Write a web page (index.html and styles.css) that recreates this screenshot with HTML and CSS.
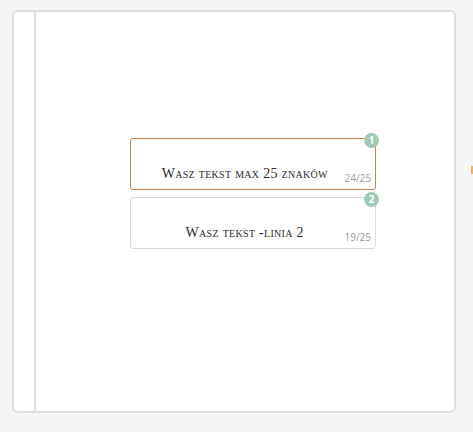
FILE: index.html
```html
<!DOCTYPE html>
<html lang="pl">
<head>
  <meta charset="UTF-8">
  <meta name="viewport" content="width=device-width, initial-scale=1.0">
  <title>Edytor tekstu</title>
  <link rel="stylesheet" href="styles.css">
</head>
<body>
  <div class="editor">
    <div class="sidebar"></div>
    <div class="canvas">
      <div class="fields">
        <div class="field active">
          <span class="badge">1</span>
          <div class="field-text">Wasz tekst max 25 znaków</div>
          <div class="counter">24/25</div>
        </div>
        <div class="field">
          <span class="badge">2</span>
          <div class="field-text">Wasz tekst -linia 2</div>
          <div class="counter">19/25</div>
        </div>
      </div>
    </div>
  </div>
  <div class="edge-mark"></div>
</body>
</html>
```

FILE: styles.css
```css
  body {
    margin: 0;
    background-color: #f4f5f5;
    font-family: 'Liberation Serif', serif;
    position: relative;
    height: 432px;
    overflow: hidden;
  }

  .editor {
    margin: 10px 0 0 12px;
    width: 444px;
    height: 403px;
    box-sizing: border-box;
    border: 2px solid #dcdedf;
    border-radius: 6px;
    background-color: #fff;
    display: flex;
  }

  .sidebar {
    width: 20px;
    border-right: 2px solid #dcdedf;
  }

  .canvas {
    flex: 1;
    padding: 126px 0 0 94px;
  }

  .fields {
    display: flex;
    flex-direction: column;
    gap: 7px;
    width: 246px;
  }

  .field {
    position: relative;
    height: 52px;
    box-sizing: border-box;
    border: 1px solid #d9d9d9;
    border-radius: 3px;
    display: flex;
    align-items: flex-end;
    padding: 0 4px 5px 14px;
  }

  .field.active {
    border-color: #c98052;
  }

  .field-text {
    flex: 1;
    text-align: center;
    font-variant: small-caps;
    font-size: 14px;
    color: #2a2a2a;
    letter-spacing: 0.3px;
    padding-bottom: 2px;
  }

  .counter {
    font-family: 'Open Sans', sans-serif;
    font-size: 10px;
    color: #999;
    line-height: 12px;
  }

  .badge {
    position: absolute;
    top: -6px;
    left: 233px;
    width: 15px;
    height: 15px;
    border-radius: 50%;
    background-color: #9ecbb6;
    color: #fff;
    font-family: 'Open Sans', sans-serif;
    font-size: 10px;
    font-weight: bold;
    line-height: 15px;
    text-align: center;
  }

  .edge-mark {
    position: absolute;
    top: 166px;
    left: 471px;
    width: 2px;
    height: 8px;
    background-color: #f0b25a;
  }
```
